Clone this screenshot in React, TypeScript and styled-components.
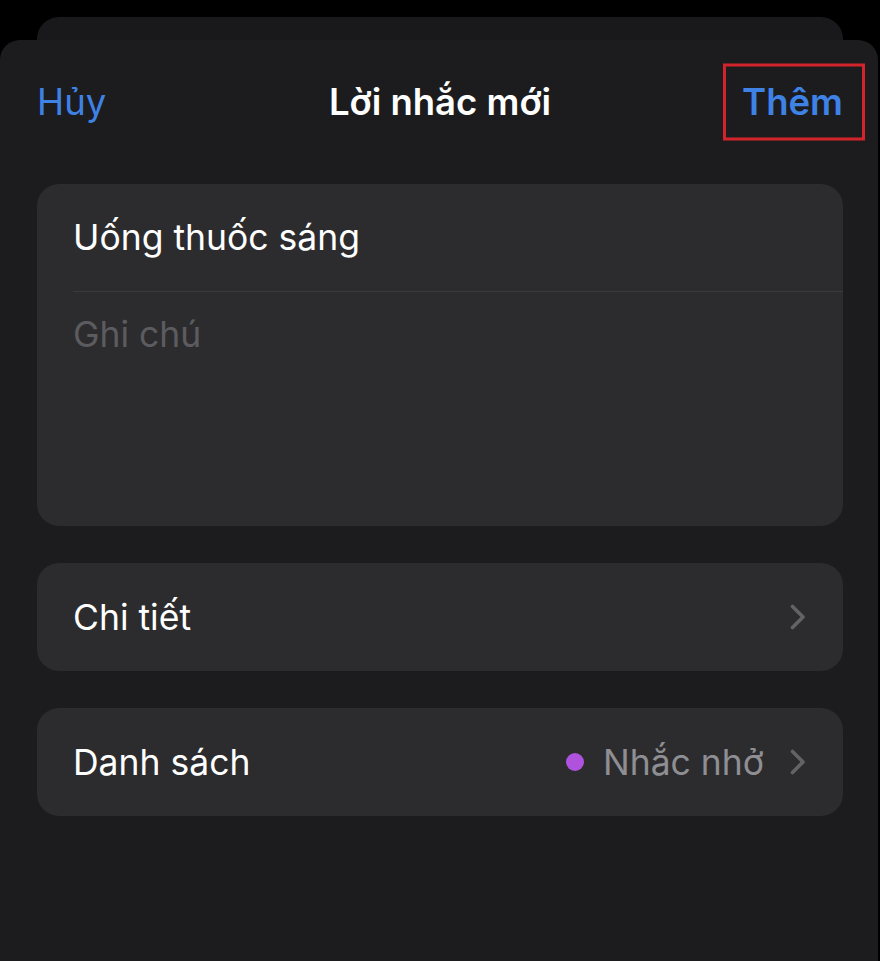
import styled, { createGlobalStyle } from 'styled-components';

const GlobalStyle = createGlobalStyle`
  html, body {
    margin: 0;
    padding: 0;
    background: #000;
  }
  body {
    font-family: Inter, "Noto Sans", "Liberation Sans", sans-serif;
    -webkit-font-smoothing: antialiased;
  }
`;

const Page = styled.div`
  display: flex;
  flex-direction: column;
  min-height: 961px;
  padding-top: 17px;
  box-sizing: border-box;
  background: #000;
`;

const BackSheet = styled.div`
  height: 23px;
  margin: 0 37px;
  background: #19191b;
  border-radius: 22px 22px 0 0;
`;

const Sheet = styled.main`
  flex: 1;
  display: flex;
  flex-direction: column;
  gap: 37px;
  margin-right: 2px;
  padding: 0 35px 0 37px;
  background: #1c1c1e;
  border-radius: 20px 20px 0 0;
`;

const Header = styled.header`
  display: grid;
  grid-template-columns: 1fr auto 1fr;
  align-items: center;
  height: 124px;
  margin-bottom: -17px;
`;

const NavButton = styled.span<{ $bold?: boolean; $align: 'left' | 'right' }>`
  justify-self: ${({ $align }) => ($align === 'left' ? 'start' : 'end')};
  position: relative;
  font-size: 36.5px;
  font-weight: ${({ $bold }) => ($bold ? 600 : 400)};
  color: #3f82e6;
`;

const Highlight = styled.span`
  position: absolute;
  left: -19px;
  right: -22px;
  top: 50%;
  height: 77px;
  transform: translateY(-50%);
  border: 3px solid #d4242b;
  box-sizing: border-box;
  pointer-events: none;
`;

const Title = styled.h1`
  margin: 0;
  font-size: 36.5px;
  font-weight: 600;
  color: #fff;
`;

const Card = styled.section`
  background: #2c2c2e;
  border-radius: 22px;
  overflow: hidden;
`;

const TitleField = styled.div`
  height: 107px;
  display: flex;
  align-items: center;
  margin-left: 36px;
  border-bottom: 1px solid #3a3a3c;
  font-size: 35.5px;
  color: #fff;
`;

const NotesField = styled.div`
  height: 234px;
  padding: 21px 36px 0;
  box-sizing: border-box;
  font-size: 35.5px;
  line-height: 44px;
  color: #5c5c60;
`;

const Row = styled.div`
  display: flex;
  align-items: center;
  height: 108px;
  padding: 0 37px 0 36px;
`;

const RowLabel = styled.span`
  flex: 1;
  font-size: 35.5px;
  color: #fff;
`;

const RowValue = styled.span`
  display: flex;
  align-items: center;
  gap: 19px;
  margin-right: 26px;
  font-size: 35.5px;
  color: #8e8e93;
`;

const Dot = styled.span<{ $color: string }>`
  width: 18px;
  height: 18px;
  border-radius: 50%;
  background: ${({ $color }) => $color};
`;

const Chevron = () => (
  <svg width="16" height="26" viewBox="0 0 16 26" fill="none">
    <path d="M2.5 2.5 L13 13 L2.5 23.5" stroke="#636366" strokeWidth="3.6" strokeLinecap="round" strokeLinejoin="round" />
  </svg>
);

export default function App() {
  return (
    <Page>
      <GlobalStyle />
      <BackSheet />
      <Sheet>
        <Header>
          <NavButton $align="left">Hủy</NavButton>
          <Title>Lời nhắc mới</Title>
          <NavButton $align="right" $bold>
            Thêm
            <Highlight />
          </NavButton>
        </Header>

        <Card>
          <TitleField>Uống thuốc sáng</TitleField>
          <NotesField>Ghi chú</NotesField>
        </Card>

        <Card>
          <Row>
            <RowLabel>Chi tiết</RowLabel>
            <Chevron />
          </Row>
        </Card>

        <Card>
          <Row>
            <RowLabel>Danh sách</RowLabel>
            <RowValue>
              <Dot $color="#af52de" />
              Nhắc nhở
            </RowValue>
            <Chevron />
          </Row>
        </Card>
      </Sheet>
    </Page>
  );
}
